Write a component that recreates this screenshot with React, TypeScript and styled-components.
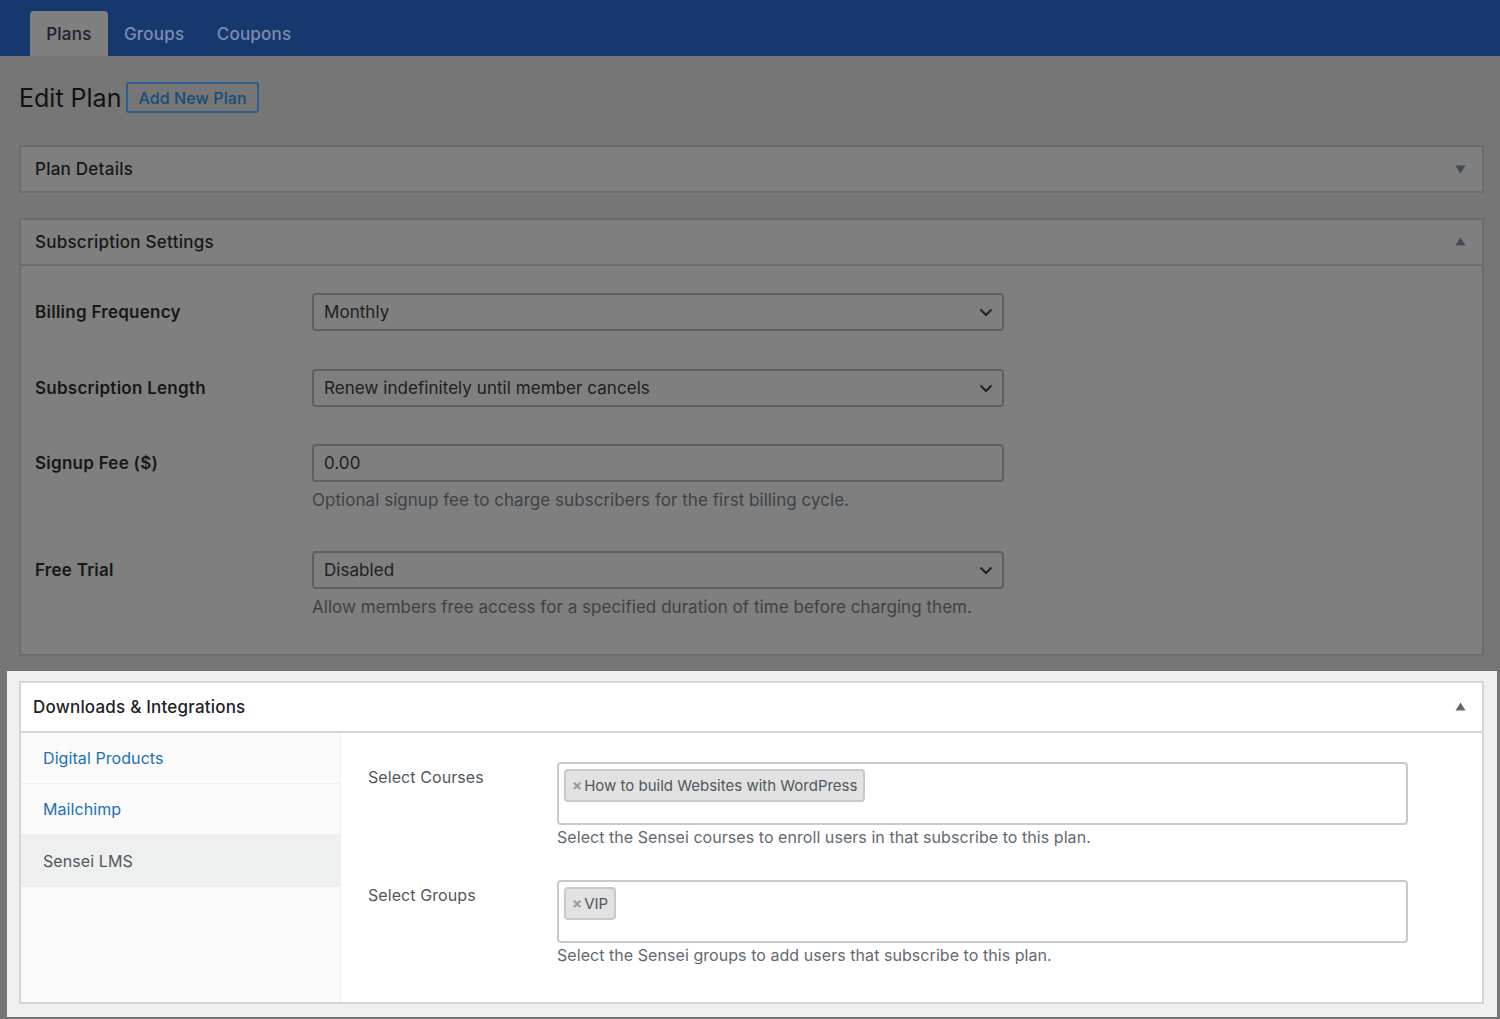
import * as React from 'react';
import styled, { createGlobalStyle } from 'styled-components';

const GlobalStyle = createGlobalStyle`
  html, body {
    margin: 0;
    padding: 0;
    background: #767676;
  }
  body {
    height: 1019px;
    overflow: hidden;
    font-family: Inter, "Liberation Sans", sans-serif;
    color: #1a1a1a;
  }
  * {
    box-sizing: border-box;
  }
`;

const TopBar = styled.div`
  display: flex;
  align-items: flex-end;
  height: 56px;
  padding-left: 30px;
  background: #17386f;
`;

const Tab = styled.div<{ $active?: boolean }>`
  display: flex;
  align-items: center;
  height: 45px;
  padding: 0 16.2px;
  border-radius: 4px 4px 0 0;
  font-size: 17px;
  font-weight: 500;
  letter-spacing: 0.22px;
  background: ${p => (p.$active ? '#7f7f7f' : 'transparent')};
  color: ${p => (p.$active ? '#1e1e2c' : '#7d8dab')};
`;

const Content = styled.div`
  padding: 0 16px 0 19px;
`;

const TitleRow = styled.div`
  display: flex;
  align-items: center;
  gap: 5px;
  height: 89px;
  padding-bottom: 6px;
`;

const Title = styled.h1`
  margin: 0;
  font-size: 25px;
  font-weight: 400;
  color: #121212;
`;

const AddButton = styled.div`
  display: flex;
  align-items: center;
  height: 31px;
  padding: 0 10px;
  border: 2px solid #2a5f8f;
  border-radius: 3px;
  font-size: 16px;
  font-weight: 500;
  letter-spacing: 0.1px;
  color: #164c7c;
`;

const Panel = styled.div`
  margin-bottom: 25px;
  border: 2px solid #6c6c6c;
  background: #7f7f7f;
`;

const PanelHeader = styled.div<{ $bordered?: boolean }>`
  display: flex;
  align-items: center;
  justify-content: space-between;
  height: ${p => (p.$bordered ? '46px' : '44px')};
  padding: 0 16px 0 14px;
  border-bottom: ${p => (p.$bordered ? '2px solid #6c6c6c' : 'none')};
  font-size: 17px;
  font-weight: 500;
  letter-spacing: 0.25px;
  color: #171717;
`;

const Triangle = styled.svg<{ $up?: boolean }>`
  display: block;
  width: 11px;
  height: 9px;
  margin-top: ${p => (p.$up ? '-2px' : '0')};
`;

const PanelBody = styled.div`
  padding: 27px 14px 36px;
`;

const FormRow = styled.div<{ $gap: number }>`
  display: flex;
  margin-bottom: ${p => p.$gap}px;
`;

const RowLabel = styled.div`
  flex: 0 0 277px;
  height: 38px;
  line-height: 38px;
  font-size: 17px;
  font-weight: 600;
  letter-spacing: 0.26px;
  color: #171717;
`;

const Control = styled.div`
  display: flex;
  align-items: center;
  justify-content: space-between;
  width: 692px;
  height: 38px;
  padding: 0 9px 0 10px;
  border: 2px solid #5f5f5f;
  border-radius: 4px;
  font-size: 17px;
  letter-spacing: 0.05px;
  color: #202020;
`;

const Hint = styled.div`
  margin-top: 8px;
  font-size: 17px;
  line-height: 21px;
  letter-spacing: 0.04px;
  color: #3d4247;
`;

const Spotlight = styled.div`
  margin: -10px -13px 0 -12px;
  height: 346px;
  padding: 10px 13px 0 12px;
  background: #f0f0f1;
`;

const DownloadsPanel = styled.div`
  height: 323px;
  border: 2px solid #d4d5d8;
  background: #fff;
`;

const DownloadsHeader = styled.div`
  display: flex;
  align-items: center;
  justify-content: space-between;
  height: 50px;
  padding: 0 16px 0 12px;
  border-bottom: 2px solid #d4d5d8;
  font-size: 17px;
  font-weight: 500;
  letter-spacing: 0.2px;
  color: #1d2327;
`;

const TabsLayout = styled.div`
  display: flex;
  height: 269px;
`;

const SideNav = styled.div`
  flex: 0 0 320px;
  border-right: 1px solid #eeeeee;
  background: #fafafa;
`;

const SideItem = styled.div<{ $active?: boolean }>`
  display: flex;
  align-items: center;
  height: ${p => (p.$active ? '52px' : '51px')};
  padding-left: 22px;
  border-bottom: ${p => (p.$active ? 'none' : '1px solid #f0f0f1')};
  font-size: 16px;
  letter-spacing: 0.08px;
  background: ${p => (p.$active ? '#eeefef' : 'transparent')};
  color: ${p => (p.$active ? '#50575e' : '#2271b1')};
`;

const FieldsArea = styled.div`
  flex: 1;
  padding: 29px 0 0 27px;
`;

const Field = styled.div`
  display: flex;
  margin-bottom: 33px;
`;

const FieldLabel = styled.div`
  flex: 0 0 189px;
  padding-top: 5px;
  font-size: 16px;
  line-height: 20px;
  letter-spacing: 0.08px;
  color: #50575e;
`;

const FieldBody = styled.div`
  width: 851px;
`;

const TokenBox = styled.div`
  display: flex;
  align-items: flex-start;
  height: 63px;
  padding: 5px;
  border: 2px solid #c8c9cb;
  border-radius: 4px;
  background: #fff;
`;

const Token = styled.div`
  display: flex;
  align-items: center;
  height: 33px;
  padding: 0 6px;
  border: 2px solid #c8c9cb;
  border-radius: 4px;
  background: #e2e2e2;
  font-size: 15px;
  color: #50575e;
`;

const TokenClose = styled.span`
  margin-right: 2px;
  font-size: 15px;
  font-weight: 700;
  color: #9a9a9a;
`;

const FieldHint = styled.div`
  margin-top: 2px;
  font-size: 16px;
  line-height: 20px;
  letter-spacing: 0.055px;
  color: #646970;
`;

const Caret = ({ up, color }: { up?: boolean; color: string }) => (
  <Triangle $up={up} viewBox="0 0 11 9">
    <path d={up ? 'M5.5 0.5 L10.5 8.5 L0.5 8.5 Z' : 'M0.5 0.5 L10.5 0.5 L5.5 8.5 Z'} fill={color} />
  </Triangle>
);

const Chevron = () => (
  <svg width="14" height="9" viewBox="0 0 14 9" fill="none">
    <path d="M1.5 1.5 L7 7 L12.5 1.5" stroke="#222" strokeWidth="2" />
  </svg>
);

export default function App(): JSX.Element {
  return (
    <>
      <GlobalStyle />
      <TopBar>
        <Tab $active>Plans</Tab>
        <Tab>Groups</Tab>
        <Tab>Coupons</Tab>
      </TopBar>
      <Content>
        <TitleRow>
          <Title>Edit Plan</Title>
          <AddButton>Add New Plan</AddButton>
        </TitleRow>

        <Panel>
          <PanelHeader>
            Plan Details
            <Caret color="#3f4a55" />
          </PanelHeader>
        </Panel>

        <Panel>
          <PanelHeader $bordered>
            Subscription Settings
            <Caret up color="#3f4a55" />
          </PanelHeader>
          <PanelBody>
            <FormRow $gap={38}>
              <RowLabel>Billing Frequency</RowLabel>
              <Control>
                Monthly
                <Chevron />
              </Control>
            </FormRow>
            <FormRow $gap={37}>
              <RowLabel>Subscription Length</RowLabel>
              <Control>
                Renew indefinitely until member cancels
                <Chevron />
              </Control>
            </FormRow>
            <FormRow $gap={40}>
              <RowLabel>Signup Fee ($)</RowLabel>
              <div>
                <Control>0.00</Control>
                <Hint>Optional signup fee to charge subscribers for the first billing cycle.</Hint>
              </div>
            </FormRow>
            <FormRow $gap={0}>
              <RowLabel>Free Trial</RowLabel>
              <div>
                <Control>
                  Disabled
                  <Chevron />
                </Control>
                <Hint>Allow members free access for a specified duration of time before charging them.</Hint>
              </div>
            </FormRow>
          </PanelBody>
        </Panel>

        <Spotlight>
          <DownloadsPanel>
            <DownloadsHeader>
              Downloads &amp; Integrations
              <Caret up color="#646970" />
            </DownloadsHeader>
            <TabsLayout>
              <SideNav>
                <SideItem>Digital Products</SideItem>
                <SideItem>Mailchimp</SideItem>
                <SideItem $active>Sensei LMS</SideItem>
              </SideNav>
              <FieldsArea>
                <Field>
                  <FieldLabel>Select Courses</FieldLabel>
                  <FieldBody>
                    <TokenBox>
                      <Token>
                        <TokenClose>×</TokenClose>
                        How to build Websites with WordPress
                      </Token>
                    </TokenBox>
                    <FieldHint>Select the Sensei courses to enroll users in that subscribe to this plan.</FieldHint>
                  </FieldBody>
                </Field>
                <Field>
                  <FieldLabel>Select Groups</FieldLabel>
                  <FieldBody>
                    <TokenBox>
                      <Token>
                        <TokenClose>×</TokenClose>
                        VIP
                      </Token>
                    </TokenBox>
                    <FieldHint>Select the Sensei groups to add users that subscribe to this plan.</FieldHint>
                  </FieldBody>
                </Field>
              </FieldsArea>
            </TabsLayout>
          </DownloadsPanel>
        </Spotlight>
      </Content>
    </>
  );
}
